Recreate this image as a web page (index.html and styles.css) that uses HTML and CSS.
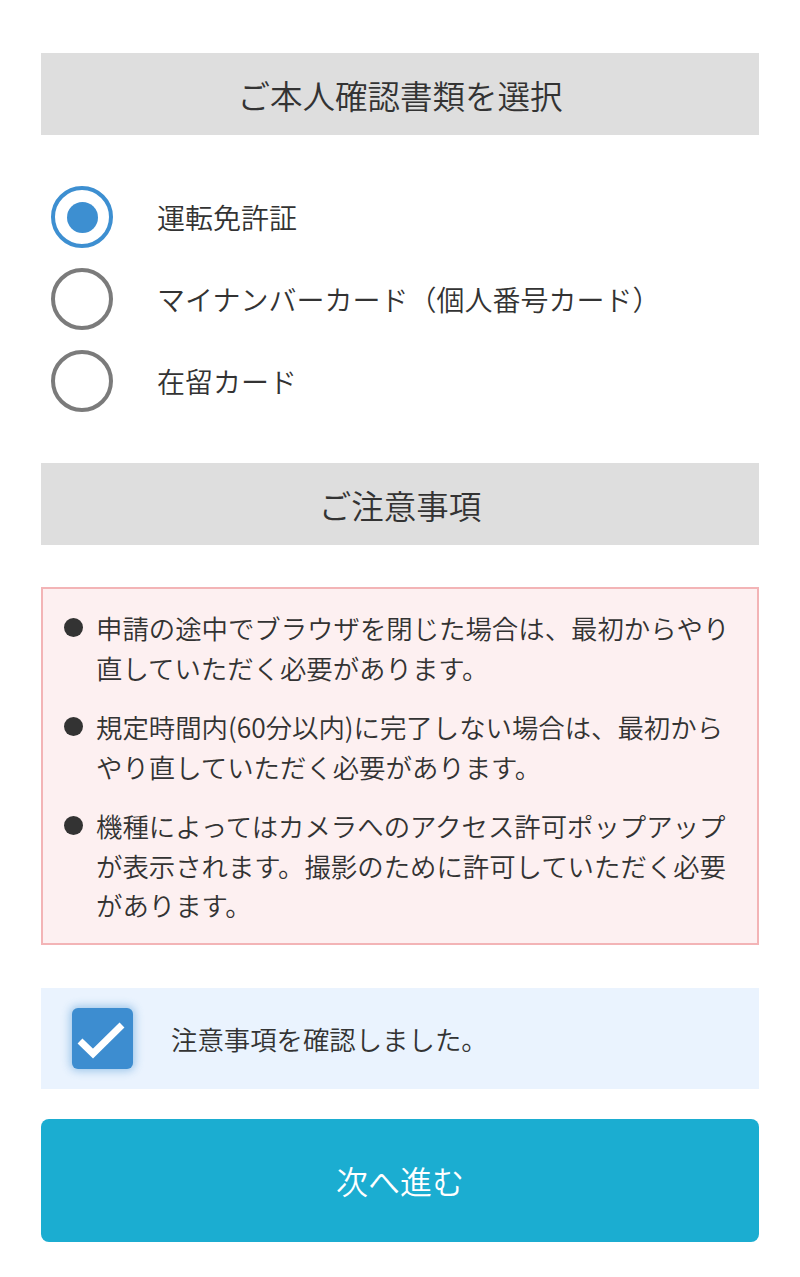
FILE: index.html
```html
<!DOCTYPE html>
<html lang="ja">
<head>
<meta charset="utf-8">
<title>ご本人確認書類を選択</title>
<link rel="stylesheet" href="styles.css">
</head>
<body>
<main class="page">
  <h2 class="section-title">ご本人確認書類を選択</h2>
  <ul class="radio-list">
    <li class="radio-row"><span class="radio radio-on"><span class="radio-dot"></span></span><span class="radio-label">運転免許証</span></li>
    <li class="radio-row"><span class="radio"></span><span class="radio-label">マイナンバーカード（個人番号カード）</span></li>
    <li class="radio-row"><span class="radio"></span><span class="radio-label">在留カード</span></li>
  </ul>
  <h2 class="section-title">ご注意事項</h2>
  <div class="notes">
    <div class="note"><span class="bullet"><span class="dot"></span></span><p class="note-text">申請の途中でブラウザを閉じた場合は、最初からやり直していただく必要があります。</p></div>
    <div class="note"><span class="bullet"><span class="dot"></span></span><p class="note-text">規定時間内(60分以内)に完了しない場合は、最初からやり直していただく必要があります。</p></div>
    <div class="note"><span class="bullet"><span class="dot"></span></span><p class="note-text">機種によってはカメラへのアクセス許可ポップアップが表示されます。撮影のために許可していただく必要があります。</p></div>
  </div>
  <div class="confirm">
    <span class="checkbox">
      <svg viewBox="0 0 61 61" width="61" height="61" aria-hidden="true"><path d="M8 33 L21 45.5 L50 17" fill="none" stroke="#ffffff" stroke-width="7" stroke-linecap="butt" stroke-linejoin="miter"/></svg>
    </span>
    <span class="confirm-label">注意事項を確認しました。</span>
  </div>
  <button class="next-btn" type="button">次へ進む</button>
</main>
</body>
</html>
```

FILE: styles.css
```css
* { box-sizing: border-box; }
html, body { margin: 0; padding: 0; background: #ffffff; }
body {
  font-family: "Noto Sans CJK JP", "Noto Sans", sans-serif;
  font-weight: 350;
  color: #333333;
}
.page {
  width: 800px;
  padding: 53px 41px 0 41px;
  display: flex;
  flex-direction: column;
}
.section-title {
  margin: 0;
  height: 82px;
  background: #dedede;
  display: flex;
  align-items: center;
  justify-content: center;
  font-size: 32.5px;
  font-weight: 350;
  color: #333333;
}
.radio-list {
  list-style: none;
  margin: 41px 0 41px 0;
  padding: 0;
}
.radio-row {
  height: 82px;
  display: flex;
  align-items: center;
  padding-left: 10px;
}
.radio {
  width: 62px;
  height: 62px;
  border-radius: 50%;
  border: 4.5px solid #7b7b7b;
  display: flex;
  align-items: center;
  justify-content: center;
  flex: none;
}
.radio-on { border-color: #3d8fd1; }
.radio-dot {
  width: 31px;
  height: 31px;
  border-radius: 50%;
  background: #3d8fd1;
}
.radio-label {
  margin-left: 44px;
  font-size: 28px;
  color: #333333;
}
.notes {
  margin-top: 42px;
  border: 2px solid #f3b4b6;
  background: #fdf0f1;
  padding: 19px 21px 18px 21px;
  display: flex;
  flex-direction: column;
  gap: 20px;
}
.note {
  display: flex;
  align-items: flex-start;
}
.bullet {
  width: 32px;
  height: 39.5px;
  flex: none;
  display: flex;
  align-items: center;
}
.dot {
  width: 19px;
  height: 19px;
  border-radius: 50%;
  background: #333333;
}
.note-text {
  margin: 0;
  font-size: 26.4px;
  line-height: 39.5px;
  color: #333333;
}
.confirm {
  margin-top: 43px;
  background: #eaf3fe;
  padding: 20px 31px;
  display: flex;
  align-items: center;
}
.checkbox {
  width: 61px;
  height: 61px;
  border-radius: 6px;
  background: #3d8dd0;
  box-shadow: 0 0 8px 2px rgba(61, 141, 208, 0.45);
  display: block;
  flex: none;
}
.checkbox svg { display: block; }
.confirm-label {
  margin-left: 38px;
  font-size: 26.4px;
  color: #333333;
}
.next-btn {
  margin-top: 30px;
  height: 123px;
  border: none;
  border-radius: 8px;
  background: #1badd1;
  color: #ffffff;
  font-family: "Noto Sans CJK JP", "Noto Sans", sans-serif;
  font-weight: 350;
  font-size: 32px;
  width: 100%;
}
```
